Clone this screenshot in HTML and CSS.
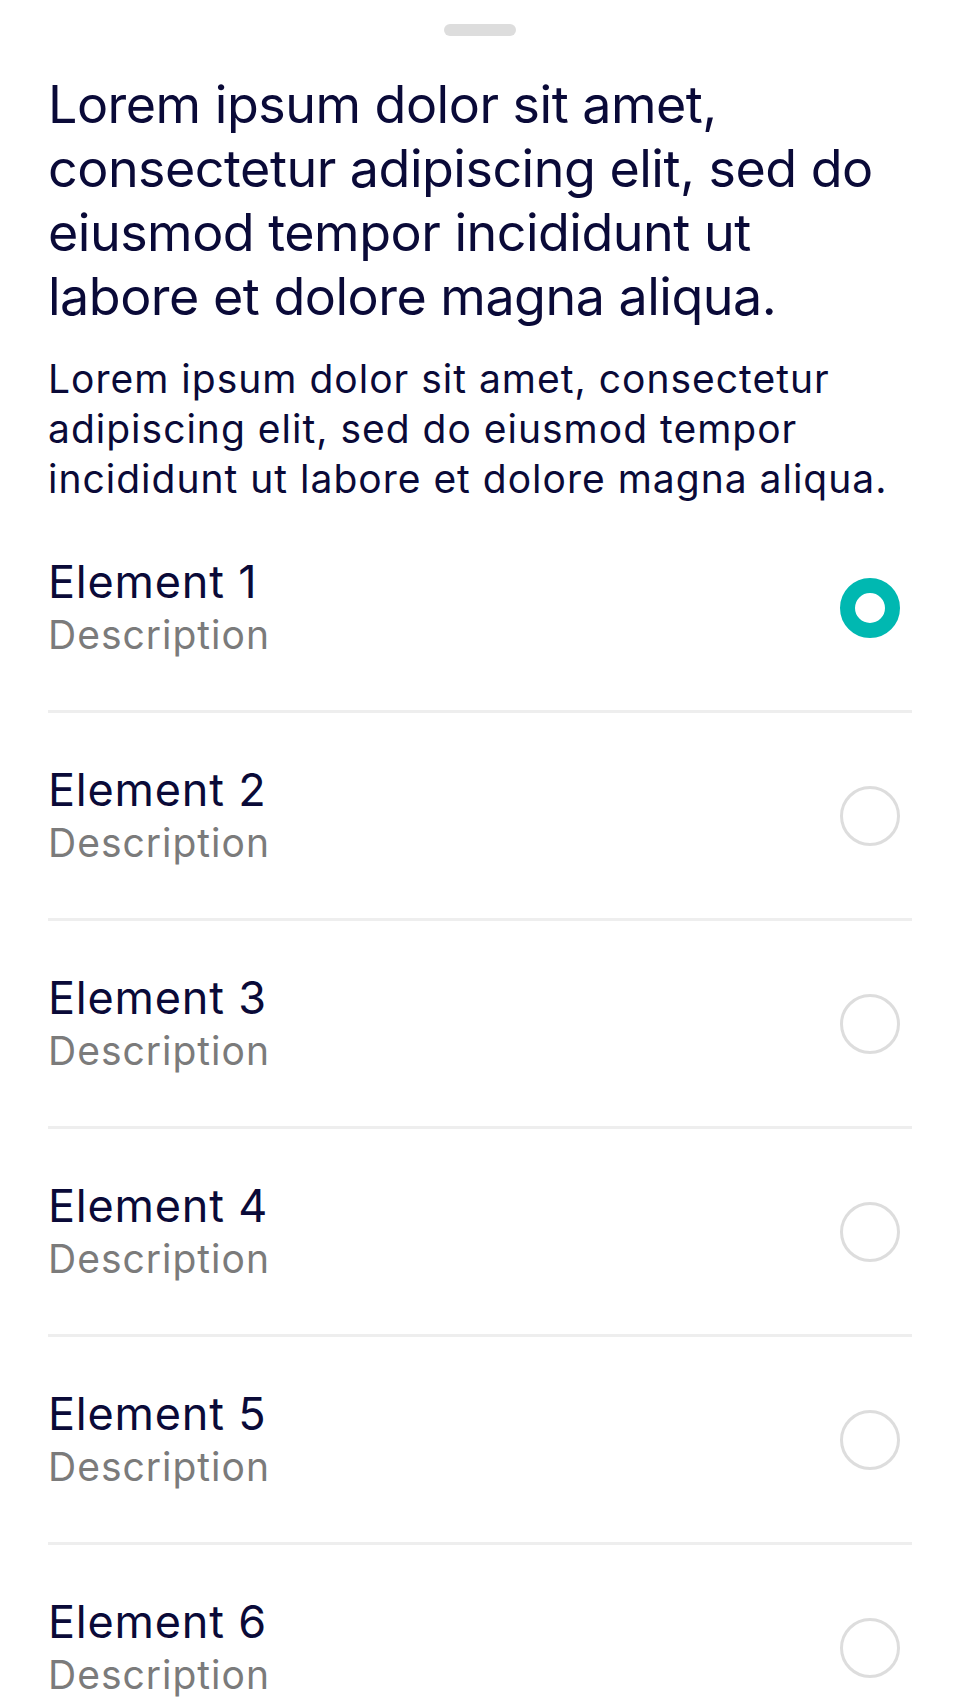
FILE: index.html
```html
<!DOCTYPE html>
<html lang="en">
<head>
<meta charset="utf-8">
<title>Sheet</title>
<link rel="stylesheet" href="styles.css">
</head>
<body>
<div class="sheet">
  <div class="handle-wrap"><div class="handle"></div></div>
  <h1 class="title">Lorem ipsum dolor sit amet, consectetur adipiscing elit, sed do eiusmod tempor incididunt ut labore et dolore magna aliqua.</h1>
  <p class="lead">Lorem ipsum dolor sit amet, consectetur adipiscing elit, sed do eiusmod tempor incididunt ut labore et dolore magna aliqua.</p>
  <ul class="list">
    <li class="row">
      <div class="text"><div class="name">Element 1</div><div class="desc">Description</div></div>
      <span class="radio selected"></span>
    </li>
    <li class="row">
      <div class="text"><div class="name">Element 2</div><div class="desc">Description</div></div>
      <span class="radio"></span>
    </li>
    <li class="row">
      <div class="text"><div class="name">Element 3</div><div class="desc">Description</div></div>
      <span class="radio"></span>
    </li>
    <li class="row">
      <div class="text"><div class="name">Element 4</div><div class="desc">Description</div></div>
      <span class="radio"></span>
    </li>
    <li class="row">
      <div class="text"><div class="name">Element 5</div><div class="desc">Description</div></div>
      <span class="radio"></span>
    </li>
    <li class="row">
      <div class="text"><div class="name">Element 6</div><div class="desc">Description</div></div>
      <span class="radio"></span>
    </li>
  </ul>
</div>
</body>
</html>
```
FILE: styles.css
```css
html, body {
  margin: 0;
  padding: 0;
  background: #ffffff;
}
body {
  font-family: Inter, "Noto Sans", "Liberation Sans", sans-serif;
  color: #0a0a38;
  height: 1704px;
  overflow: hidden;
}
.sheet {
  padding: 24px 48px 0;
}
.handle-wrap {
  display: flex;
  justify-content: center;
}
.handle {
  width: 72px;
  height: 12px;
  border-radius: 6px;
  background: #dddddd;
}
.title {
  margin: 37px 0 0;
  font-size: 52px;
  line-height: 64px;
  font-weight: 400;
  letter-spacing: -0.5px;
}
.lead {
  margin: 25px 0 0;
  font-size: 39px;
  line-height: 50px;
  letter-spacing: 1px;
}
.list {
  list-style: none;
  margin: 1px 0 0;
  padding: 0;
}
.row {
  display: flex;
  align-items: center;
  justify-content: space-between;
  height: 205px;
  border-bottom: 3px solid #eeeeee;
}
.row:last-child {
  border-bottom: none;
}
.name {
  font-size: 45px;
  line-height: 54px;
  letter-spacing: 0.8px;
}
.desc {
  font-size: 39px;
  line-height: 52px;
  color: #7b7b7b;
  letter-spacing: 1px;
}
.radio {
  box-sizing: border-box;
  width: 60px;
  height: 60px;
  margin-right: 12px;
  border-radius: 50%;
  border: 3px solid #dddddd;
}
.radio.selected {
  border: 15px solid #00b8b1;
}
```
